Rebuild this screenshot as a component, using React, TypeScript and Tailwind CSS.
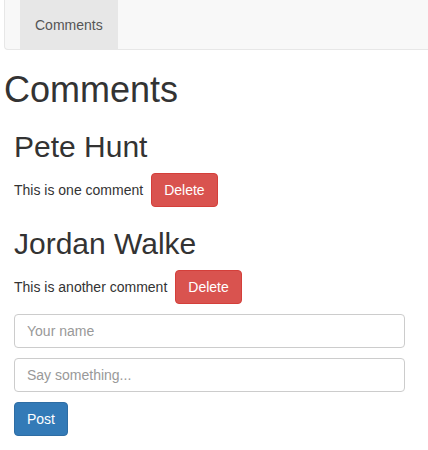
import React from 'react';

const comments = [
  { author: 'Pete Hunt', text: 'This is one comment' },
  { author: 'Jordan Walke', text: 'This is another comment' },
];

export default function App() {
  return (
    <div className="min-h-[450px] bg-white pl-[4px] text-[14px] leading-[20px] text-[#333] [font-family:'Liberation_Sans',Arial,sans-serif] overflow-hidden">
      {/* Navbar */}
      <div className="mb-[20px] flex h-[50px] rounded-bl-[4px] border-b border-l border-[#e7e7e7] bg-[#f8f8f8] px-[15px]">
        <a className="flex h-[49px] items-center bg-[#e7e7e7] px-[15px] text-[#555]">Comments</a>
      </div>

      <h1 className="mb-[10px] text-[36px] font-medium leading-[1.1]">Comments</h1>

      <div className="pl-[10px]">
        {comments.map((c) => (
          <div key={c.author}>
            <h2 className="mb-[10px] mt-[20px] text-[30px] font-medium leading-[1.1] whitespace-nowrap">{c.author}</h2>
            <p className="mb-[10px] flex items-center">
              <span>{c.text}</span>
              <button className="ml-[8px] h-[34px] rounded-[4px] border border-[#d43f3a] bg-[#d9534f] px-[12px] text-white">
                Delete
              </button>
            </p>
          </div>
        ))}

        <form className="flex flex-col gap-[10px]">
          <input
            placeholder="Your name"
            className="h-[34px] w-[391px] rounded-[4px] border border-[#ccc] px-[12px] text-[14px] placeholder:text-[#999]"
          />
          <input
            placeholder="Say something..."
            className="h-[34px] w-[391px] rounded-[4px] border border-[#ccc] px-[12px] text-[14px] placeholder:text-[#999]"
          />
          <div>
            <button
              type="button"
              className="h-[34px] rounded-[4px] border border-[#2e6da4] bg-[#337ab7] px-[12px] text-white"
            >
              Post
            </button>
          </div>
        </form>
      </div>
    </div>
  );
}
